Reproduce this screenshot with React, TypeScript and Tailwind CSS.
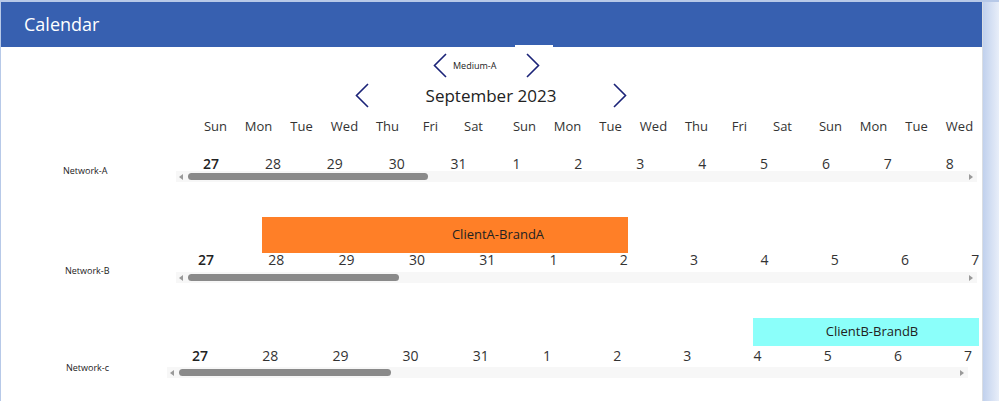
import React from "react";

const weeks = [
  ["Sun", "Mon", "Tue", "Wed", "Thu", "Fri", "Sat"],
  ["Sun", "Mon", "Tue", "Wed", "Thu", "Fri", "Sat"],
  ["Sun", "Mon", "Tue", "Wed"],
];

function Chevron({ dir }: { dir: "left" | "right" }) {
  return (
    <svg width="14" height="25" viewBox="0 0 14 25" className="shrink-0">
      <polyline
        points={dir === "left" ? "13,1 1.5,12.5 13,24" : "1,1 12.5,12.5 1,24"}
        fill="none"
        stroke="#1b2378"
        strokeWidth="1.6"
      />
    </svg>
  );
}

function ScrollBar({ thumb }: { thumb: string }) {
  return (
    <div className="h-[11px] w-[801px] bg-[#f7f7f7] flex items-center">
      <svg width="4" height="6" viewBox="0 0 4 6" className="ml-[3px] shrink-0">
        <polygon points="4,0 0,3 4,6" fill="#9a9a9a" />
      </svg>
      <div className={"ml-[5px] h-[7px] rounded-full bg-[#8a8a8a] " + thumb}></div>
      <div className="flex-1"></div>
      <svg width="4" height="6" viewBox="0 0 4 6" className="mr-[4px] shrink-0">
        <polygon points="0,0 4,3 0,6" fill="#9a9a9a" />
      </svg>
    </div>
  );
}

function Numbers({ nums, cell, offset }: { nums: number[]; cell: string; offset: string }) {
  return (
    <div className={"flex h-[14px] leading-[14px] text-[14px] text-[#333] whitespace-nowrap " + offset}>
      {nums.map((n, i) => (
        <div key={i} className={"shrink-0 " + cell + (i == 0 ? " font-semibold text-[#222]" : "")}>
          {n}
        </div>
      ))}
    </div>
  );
}

export default function App() {
  return (
    <div className="w-[999px] h-[401px] overflow-hidden bg-[#b7c9e8] flex font-['Open_Sans',sans-serif]">
      {/* white page */}
      <div className="ml-[1px] mt-[2px] w-[982px] shrink-0 bg-white border-r border-[#d9dde3] overflow-hidden">
        <div className="relative h-[45px] bg-[#3760b0] flex items-center pl-[23px]">
          <span className="text-white text-[18px]">Calendar</span>
          <div className="absolute left-[514px] bottom-0 w-[38px] h-[2px] bg-white"></div>
        </div>

        {/* medium selector */}
        <div className="mt-[6px] h-[25px] flex items-center pl-[432px]">
          <Chevron dir="left" />
          <span className="w-[79px] pl-[6px] text-[9px] text-[#222] leading-none">Medium-A</span>
          <Chevron dir="right" />
        </div>

        {/* month selector */}
        <div className="mt-[5px] h-[25px] flex items-center pl-[354px]">
          <Chevron dir="left" />
          <span className="w-[244px] text-center text-[17px] text-[#222]">September 2023</span>
          <Chevron dir="right" />
        </div>

        {/* week days */}
        <div className="mt-[9px] h-[18px] flex pl-[193px] text-[13px] leading-[18px] text-[#333]">
          {weeks.map((w, i) => (
            <div key={i} className={"flex " + (i == 1 ? "ml-[8px]" : i == 2 ? "ml-[5px]" : "")}>
              {w.map((d, j) => (
                <div key={j} className="w-[43px] text-center">
                  {d}
                </div>
              ))}
            </div>
          ))}
        </div>

        {/* Network-A */}
        <div className="mt-[22px] flex">
          <div className="w-[175px] shrink-0 pl-[62px] pt-[9px] text-[9px] leading-[10px] text-[#222]">Network-A</div>
          <div className="flex flex-col">
            <Numbers nums={[27, 28, 29, 30, 31, 1, 2, 3, 4, 5, 6, 7, 8]} cell="w-[61.9px]" offset="ml-[27px]" />
            <ScrollBar thumb="w-[240px]" />
          </div>
        </div>

        {/* Network-B */}
        <div className="mt-[35px] flex">
          <div className="w-[175px] shrink-0 pl-[64px] pt-[49px] text-[9px] leading-[10px] text-[#222]">Network-B</div>
          <div className="flex flex-col">
            <div className="ml-[86px] w-[366px] h-[36px] bg-[#ff7f27] flex items-center justify-center pl-[106px] text-[13px] text-[#222]">
              ClientA-BrandA
            </div>
            <Numbers nums={[27, 28, 29, 30, 31, 1, 2, 3, 4, 5, 6, 7]} cell="w-[70.3px]" offset="ml-[22px]" />
            <div className="mt-[5px]">
              <ScrollBar thumb="w-[211px]" />
            </div>
          </div>
        </div>

        {/* Network-c */}
        <div className="mt-[35px] flex">
          <div className="w-[166px] shrink-0 pl-[65px] pt-[45px] text-[9px] leading-[10px] text-[#222]">Network-c</div>
          <div className="flex flex-col">
            <div className="ml-[586px] w-[226px] h-[28px] bg-[#8bfffa] flex items-center justify-center pl-[12px] text-[13px] text-[#222]">
              ClientB-BrandB
            </div>
            <div className="mt-[3px]">
              <Numbers nums={[27, 28, 29, 30, 31, 1, 2, 3, 4, 5, 6, 7]} cell="w-[70.2px]" offset="ml-[25px]" />
            </div>
            <div className="mt-[4px]">
              <ScrollBar thumb="w-[212px]" />
            </div>
          </div>
        </div>
      </div>
      <div className="w-[16px] shrink-0 mt-[2px] bg-gradient-to-r from-[#c1d1ed] to-[#e8eef9]"></div>
    </div>
  );
}
